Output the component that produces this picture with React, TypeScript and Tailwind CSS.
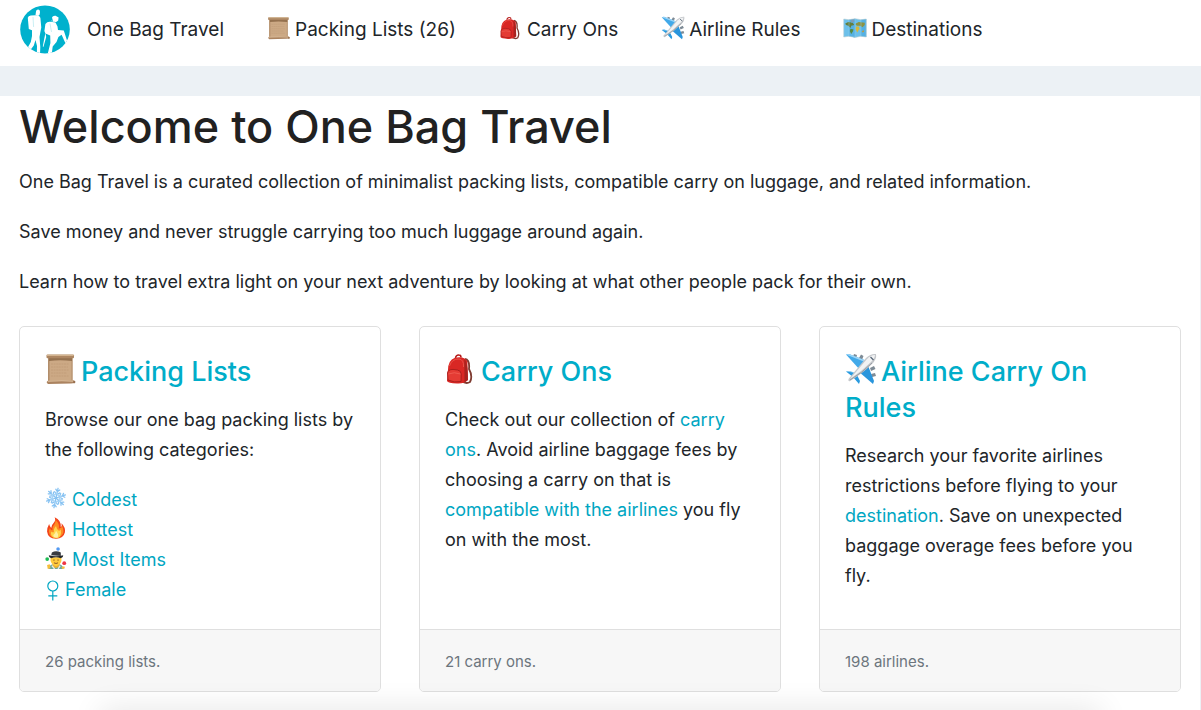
import type { ReactNode } from "react";

type IconProps = { className?: string };

function Logo() {
  return (
    <svg viewBox="0 0 50 50" className="size-[50px]" role="img" aria-label="One Bag Travel logo">
      <defs>
        <clipPath id="disc">
          <ellipse cx="25" cy="24.5" rx="24.8" ry="24" />
        </clipPath>
      </defs>
      <g clipPath="url(#disc)">
        <rect width="50" height="50" fill="#00b1cd" />
        <g fill="#fff">
          <path d="M16 6.5Q16.2 4.3 18.4 4.5Q20.4 4.8 20 7.5Q20 10.5 18 11L15.5 10Z" />
          <path d="M7.8 12.8Q8.2 10.7 10.8 10.5L15.5 10.2Q19.6 10 20.4 13L21.3 22.5L20.5 26.5L19.5 32L20.3 42L20 50H16.8L17 41L15.5 35L13.8 40.5L10.8 44.5L12 50L7 44L10.8 37L12 31L12 25.2L8.8 24Z" />
          <path d="M32 12.6Q32.6 10.5 35.6 10.8L38.6 12.6L38.2 15.6Q36.2 18 33.2 17Z" />
          <path d="M25.4 19Q27.2 16.3 30.4 16.7L35.5 17.4L37.5 21.4L38 25L43.8 25.4L47.2 36L46 39.5L41.6 29.8L38.4 32L36.5 37L32.7 41.5L31.6 50H27.4L30.4 38L30.2 30.4L25.4 28.6L24.4 26Z" />
          <path d="M25.4 28L26.2 32L23.4 42L22.8 41.5L24.4 33Z" />
        </g>
        <path d="M13 12L13.6 22M30 18.5L31.5 27M31 15.8L35 16.8" stroke="#b3e8ef" strokeWidth=".7" />
      </g>
    </svg>
  );
}

function ScrollIcon({ className }: IconProps) {
  return (
    <svg viewBox="0 0 32 32" className={className} aria-hidden="true">
      <path d="M3 4H27.5V29H3Z" fill="#cca985" />
      <path d="M3 4H4.5V29H3ZM26.5 4H27.5V29H26.5Z" fill="#b18d6a" />
      <path d="M4 5H27V8Q15 6.5 4 8Z" fill="#94714f" />
      <rect x="1.5" y="1.5" width="27.5" height="3.8" rx="1" fill="#ad8662" />
      <path d="M2 2.3H28.5" stroke="#dcc09c" />
      <path d="M6 11H24M6 14H23M6 17H24M6 20H22M6 23H24" stroke="#bd9974" strokeWidth=".6" strokeDasharray="2 .6" />
      <path d="M2 28Q15 27 29 27.3L30 30L26 30.4L3 31Q1 30 2 28Z" fill="#ab8360" />
      <path d="M2.5 28.2Q16 27.4 29 28.1" stroke="#dfc2a0" strokeWidth="1.1" fill="none" />
      <circle cx="29.2" cy="29" r="1.2" fill="#987050" />
    </svg>
  );
}

function BackpackIcon({ className }: IconProps) {
  return (
    <svg viewBox="0 0 32 32" className={className} aria-hidden="true">
      <path d="M20 6Q25 7 24 16Q28 23 25 29Q22 31 18 29" fill="none" stroke="#7f3c32" strokeWidth="1.8" />
      <path d="M10.5 5Q11 1.8 14 2Q16 2 16 4.5" fill="none" stroke="#b31c1a" strokeWidth="1.5" />
      <path d="M3.3 13Q5 4.2 14 4.2Q21 4.2 22.4 9L23 27Q19 31 12 30.5Q3 30 2 28Z" fill="#d92724" />
      <path d="M19.3 6Q23 9 22.8 27L19.5 29.5Z" fill="#a8231f" />
      <path d="M4.5 13Q7 5.6 14 6Q19 6.4 18.5 14" fill="none" stroke="#ea5148" strokeWidth="1" />
      <path d="M2.5 20Q3 16.5 8 16.4L12.5 17Q16 17.5 16.2 21L16 28.5Q9 30 3 27Z" fill="#e43b34" stroke="#a51c1b" strokeWidth=".9" />
      <path d="M3.5 21Q9 18.5 15.5 21" fill="none" stroke="#f2665a" strokeWidth=".7" />
    </svg>
  );
}

function PlaneIcon({ className }: IconProps) {
  return (
    <svg viewBox="0 0 32 32" className={className} aria-hidden="true">
      <path d="M8 4L9 1L12 2L11 6ZM14 5L16 1.5L18.5 3L17 7ZM25 15L29 13L30.5 16L26 18ZM26 21L30 20L31 23L27 24Z" fill="#7e8b96" />
      <path d="M1 1.5L4 1L22 8L15 17Z" fill="#42a9e9" />
      <path d="M22 10L29 28L28 31L13 18Z" fill="#2995dc" />
      <path d="M1 18.5L4 18L13 21L8 24ZM11 20L15 28L14 31L8 24Z" fill="#299adf" />
      <path d="M1 1.5L4 1L22 8L20 9ZM1 18.5L4 18L12 20Z" fill="#9bd5f7" />
      <path d="M5 28Q3 29 3.5 26L21 5Q26 .3 31 1Q32 6 27 11Q17 21 5 28Z" fill="#c5c8cc" />
      <path d="M5 26L22 6Q26 2 30 2Q30 5 26 9Q16 19 5 26Z" fill="#f2f3f4" />
      <path d="M25.5 4L28.5 7" stroke="#566575" strokeWidth="1.2" />
      <path d="M5 27Q17 20 27 10" fill="none" stroke="#8c9299" strokeWidth=".8" />
    </svg>
  );
}

function MapIcon({ className }: IconProps) {
  return (
    <svg viewBox="0 0 32 32" className={className} aria-hidden="true">
      <path d="M1 4L8 5L16 3.5L24 5L31 4V28L24 27L16 28.5L8 27L1 28Z" fill="#6cc0ea" />
      <path d="M8 5L16 3.5V28.5L8 27ZM24 5L31 4V28L24 27Z" fill="#55b1e3" />
      <path d="M3 10L7 8L13 9L15 12L11 13L10 16L7 13L4 12Z" fill="#657e3c" />
      <path d="M10 17L14 18L13 21L11 24L9 20Z" fill="#548b45" />
      <path d="M17 10L21 8L29 9L29 12L26 15L23 13L19 13L17 12Z" fill="#8d9342" />
      <path d="M17 14L21 14L22 17L19 22L17 18Z" fill="#d6b73d" />
      <path d="M25 20L28 19L28 21L26 22Z" fill="#ba9b42" />
      <path d="M10 5L15 4L15 8L11 9Z" fill="#7d9fb8" />
      <path d="M8 5V27M16 4V28M24 5V27" stroke="#93cdea" strokeWidth=".6" />
      <path d="M1 4L8 5L16 3.5L24 5L31 4V28L24 27L16 28.5L8 27L1 28Z" fill="none" stroke="#b5ccd4" strokeWidth=".8" />
    </svg>
  );
}

function SnowflakeIcon({ className }: IconProps) {
  return (
    <svg viewBox="0 0 32 32" className={className} fill="none" stroke="#86c2f2" strokeWidth="1.8" strokeLinecap="round" aria-hidden="true">
      {[0, 60, 120, 180, 240, 300].map((angle) => (
        <g key={angle} transform={`rotate(${angle + 12} 16 16)`}>
          <path d="M16 16V1.5M16 11L12 7.5M16 11L20 7.5M16 6.5L13 3.5M16 6.5L19 3.5" />
          <path d="M13 12L16 9L19 12" stroke="#a9d5f7" />
        </g>
      ))}
    </svg>
  );
}

function FireIcon({ className }: IconProps) {
  return (
    <svg viewBox="0 0 32 32" className={className} aria-hidden="true">
      <path d="M14 .5Q24 5 23 15Q25 13 24 9Q30 15 29 22Q27 31 16 31.5Q4 31 3 21Q2.5 16 6 10Q7 14 9 16Q9 12 13 8Q16 5 14 .5Z" fill="#f2441b" />
      <path d="M15 4Q22 10 20 17Q25 15 25 13Q29 22 24 27Q21 31 16 31Q7 30 6 23Q5 20 7 16Q9 20 11 19Q10 15 14 10Q16 8 15 4Z" fill="#ff8b22" />
      <path d="M16 13Q17 18 20 20Q22 20 23 18Q25 30 16 31Q7 29 9 21Q11 23 13 22Q12 17 16 13Z" fill="#ffd44a" />
      <path d="M16 20Q21 26 18 30Q12 30 12 26Q14 26 16 20Z" fill="#fff0a0" />
    </svg>
  );
}

function JugglerIcon({ className }: IconProps) {
  return (
    <svg viewBox="0 0 32 32" className={className} aria-hidden="true">
      <circle cx="19" cy="2.8" r="2.6" fill="#539af2" />
      <circle cx="3.2" cy="17.5" r="2.7" fill="#1ebd55" />
      <circle cx="28" cy="23.5" r="2.8" fill="#ef3544" />
      <path d="M5 32Q6 25 13 25H19Q26 25 27 32Z" fill="#69a8a0" />
      <path d="M11 23H21V28L16 31L11 28Z" fill="#efb12c" />
      <path d="M8 15H24Q25 26 16 28Q7 26 8 15Z" fill="#ffcb3e" />
      <path d="M9 12L10 8Q16 4 23 8L23 13Z" fill="#393c41" />
      <path d="M5.5 12Q16 15 26.5 12Q27 15 23 16.5Q16 13.5 9 16.5Q5 15 5.5 12Z" fill="#25282d" />
      <path d="M12 19H14M18 19H20M13 23Q16 25 19 23" stroke="#79451e" strokeWidth="1.2" fill="none" />
      <path d="M10 27L14 32M22 27L19 32" stroke="#eee9dd" strokeWidth="2" />
      <path d="M3 26L7 25L8 31L4 32ZM24 29L28 28L29 31L25 32Z" fill="#f6be3b" />
    </svg>
  );
}

function FemaleIcon() {
  return (
    <svg viewBox="0 0 16 24" className="mt-1 mr-1 h-6 w-4 shrink-0" fill="none" stroke="currentColor" strokeWidth="1.2" aria-hidden="true">
      <circle cx="7.8" cy="7" r="5" />
      <path d="M7.8 12V21.5M3.3 16.8H12.3" />
    </svg>
  );
}

const navItems = [
  { label: "Packing Lists (26)", Icon: ScrollIcon },
  { label: "Carry Ons", Icon: BackpackIcon },
  { label: "Airline Rules", Icon: PlaneIcon },
  { label: "Destinations", Icon: MapIcon },
];

const listIcon = "mt-0.5 mr-[5px] size-[22px] shrink-0";

const categories = [
  { label: "Coldest", icon: <SnowflakeIcon className={listIcon} /> },
  { label: "Hottest", icon: <FireIcon className={listIcon} /> },
  { label: "Most Items", icon: <JugglerIcon className={listIcon} /> },
  { label: "Female", icon: <FemaleIcon /> },
];

function TextLink({ children }: { children: ReactNode }) {
  return (
    <a href="#" className="text-[#00a6c2] hover:underline">
      {children}
    </a>
  );
}

function Card({ title, icon, footer, children }: { title: string; icon: ReactNode; footer: string; children: ReactNode }) {
  return (
    <article className="flex flex-col overflow-hidden rounded-[5px] border border-[#dfdfdf] bg-white">
      <div className="flex-1 px-[25px] pt-[26px] pb-6">
        <h2 className="mb-[15px] text-[27px] leading-9 font-medium">
          <a href="#" className="text-[#00adc9]">
            {icon}
            {title}
          </a>
        </h2>
        {children}
      </div>
      <footer className="border-t border-[#dfdfdf] bg-[#f7f7f7] px-[25px] pt-[17px] pb-3.5 text-[15px] leading-[30px] text-[#6c757d]">
        {footer}
      </footer>
    </article>
  );
}

const titleIcon = "mr-1 inline-block size-8 align-[-4px]";

export default function App() {
  return (
    <div className="min-h-screen bg-white font-['Inter',sans-serif] text-lg leading-[30px] text-[#212529]">
      <header className="border-b-[30px] border-[#ecf1f5]">
        <nav className="flex h-[66px] items-center gap-[43px] px-5 pb-1.5 text-[19px]" aria-label="Main">
          <a href="#" className="flex items-center gap-[17px] whitespace-nowrap">
            <Logo />
            One Bag Travel
          </a>
          {navItems.map(({ label, Icon }) => (
            <a key={label} href="#" className="flex items-center gap-1 whitespace-nowrap">
              <Icon className="mb-1 size-6" />
              {label}
            </a>
          ))}
        </nav>
      </header>

      <main className="border-r border-[#ecf1f5] px-[19px] pt-px pb-[18px]">
        <h1 className="mb-2.5 text-[45px] leading-[60px] font-medium text-[#212121]">Welcome to One Bag Travel</h1>
        <div className="space-y-5">
          <p>One Bag Travel is a curated collection of minimalist packing lists, compatible carry on luggage, and related information.</p>
          <p>Save money and never struggle carrying too much luggage around again.</p>
          <p>Learn how to travel extra light on your next adventure by looking at what other people pack for their own.</p>
        </div>

        <section className="mt-[29px] grid grid-cols-3 gap-[38px]">
          <Card title="Packing Lists" icon={<ScrollIcon className={titleIcon} />} footer="26 packing lists.">
            <p>Browse our one bag packing lists by the following categories:</p>
            <ul className="mt-5">
              {categories.map(({ label, icon }) => (
                <li key={label}>
                  <a href="#" className="flex w-fit items-start text-[#00a6c2] hover:underline">
                    {icon}
                    {label}
                  </a>
                </li>
              ))}
            </ul>
          </Card>
          <Card title="Carry Ons" icon={<BackpackIcon className={titleIcon} />} footer="21 carry ons.">
            <p>
              Check out our collection of <TextLink>carry ons</TextLink>. Avoid airline baggage fees by choosing a carry on that is{" "}
              <TextLink>compatible with the airlines</TextLink> you fly on with the most.
            </p>
          </Card>
          <Card title="Airline Carry On Rules" icon={<PlaneIcon className={titleIcon} />} footer="198 airlines.">
            <p>
              Research your favorite airlines restrictions before flying to your <TextLink>destination</TextLink>. Save on unexpected
              baggage overage fees before you fly.
            </p>
          </Card>
        </section>
      </main>

      <div className="pointer-events-none fixed inset-x-[110px] bottom-0 h-0 shadow-[0_10px_30px_10px_rgba(0,0,0,0.12)]" />
    </div>
  );
}
